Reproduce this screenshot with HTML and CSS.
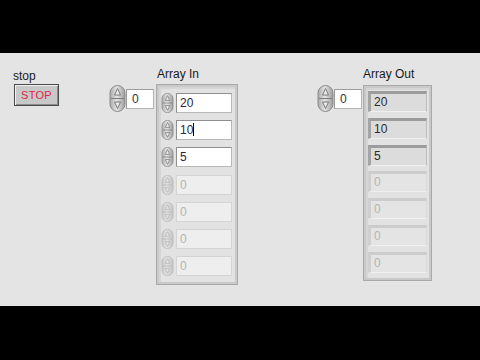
FILE: index.html
```html
<!DOCTYPE html>
<html lang="en">
<head>
    <meta charset="UTF-8">
    <title>Front Panel</title>
    <link rel="stylesheet" href="styles.css">
</head>
<body>
    <div class="letterbox"></div>
    <main class="panel">
        <div class="stop-ctrl">
            <div class="label">stop</div>
            <button class="stop-btn">STOP</button>
        </div>

        <div class="array-ctrl array-in">
            <div class="label">Array In</div>
            <div class="index">
                <svg class="spin big" viewBox="0 0 17 27"><use href="#spinner"/></svg>
                <div class="index-box">0</div>
            </div>
            <div class="frame" id="array-in"></div>
        </div>

        <div class="array-ctrl array-out">
            <div class="label">Array Out</div>
            <div class="index">
                <svg class="spin big" viewBox="0 0 17 27"><use href="#spinner"/></svg>
                <div class="index-box">0</div>
            </div>
            <div class="frame" id="array-out"></div>
        </div>
    </main>
    <div class="letterbox bottom"></div>

    <svg width="0" height="0" style="position: absolute">
        <defs>
            <linearGradient id="knob" x1="0" x2="1">
                <stop offset="0" stop-color="#a9a9a9"/>
                <stop offset="0.45" stop-color="#e4e4e4"/>
                <stop offset="1" stop-color="#9c9c9c"/>
            </linearGradient>
            <g id="spinner">
                <rect x="1" y="0.5" width="15" height="26" rx="7.5" fill="url(#knob)" stroke="#8a8a8a"/>
                <line x1="2" y1="13.5" x2="15" y2="13.5" stroke="#7d7d7d"/>
                <path d="M8.5 3.5 L5.5 10 H11.5 Z" fill="#eaeaea" stroke="#6e6e6e" stroke-width="0.9"/>
                <path d="M8.5 23.5 L5.5 17 H11.5 Z" fill="#eaeaea" stroke="#6e6e6e" stroke-width="0.9"/>
            </g>
        </defs>
    </svg>

    <script>
        const arrayIn = [20, 10, 5];
        const rows = 7;

        function renderArray(id, values, isControl) {
            const frame = document.getElementById(id);
            for (let i = 0; i < rows; i++) {
                const row = document.createElement("div");
                row.classList.add("elem");
                if (i >= values.length) row.classList.add("empty");

                const value = i < values.length ? values[i] : 0;
                let html = "";
                if (isControl) {
                    html += '<svg class="spin" viewBox="0 0 17 27"><use href="#spinner"/></svg>';
                }
                html += `<div class="field">${value}${isControl && i === 1 ? '<span class="caret"></span>' : ""}</div>`;
                row.innerHTML = html;
                frame.appendChild(row);
            }
        }

        renderArray("array-in", arrayIn, true);
        renderArray("array-out", arrayIn, false);
    </script>
</body>
</html>
```

FILE: styles.css
```css
body {
    margin: 0;
    width: 480px;
    height: 360px;
    background: #000;
    font-family: "Liberation Sans", Arial, sans-serif;
    font-size: 12px;
    color: #1a1a1a;
    overflow: hidden;
}

.letterbox {
    height: 53px;
    background: #000;
}

.letterbox.bottom {
    height: 54px;
}

.panel {
    height: 253px;
    background: #e4e4e4;
    display: flex;
    align-items: flex-start;
    padding-top: 14px;
    box-sizing: border-box;
}

.label {
    height: 14px;
    line-height: 14px;
}

/* stop button */
.stop-ctrl {
    margin-left: 13px;
    padding-top: 2px;
}

.stop-btn {
    display: block;
    margin: 1px 0 0 1px;
    width: 45px;
    height: 22px;
    padding: 0;
    border: 1px solid #4a4a4a;
    box-shadow: inset 1px 1px 0 #f2f2f2, inset -1px -1px 0 #8c8c8c;
    background: #c8c8c8;
    color: #e4244c;
    font-family: "Liberation Sans", Arial, sans-serif;
    font-size: 11px;
    letter-spacing: 0.3px;
}

/* array controls */
.array-ctrl {
    display: grid;
    grid-template-columns: auto auto;
    grid-template-rows: 17px auto;
    column-gap: 3px;
}

.array-ctrl .label {
    grid-column: 2;
}

.array-ctrl .index {
    grid-column: 1;
    grid-row: 2;
    display: flex;
    align-items: center;
    height: 27px;
    margin-top: 1px;
}

.array-in {
    margin-left: 50px;
}

.array-in .frame {
    margin-left: -1px;
}

.array-out {
    margin-left: 79px;
    column-gap: 1px;
}

.spin {
    width: 15px;
    height: 20px;
    flex-shrink: 0;
}

.spin.big {
    width: 17px;
    height: 27px;
}

.index-box {
    width: 28px;
    height: 20px;
    box-sizing: border-box;
    border: 1px solid #b4b4b4;
    border-top-color: #9a9a9a;
    border-left-color: #9a9a9a;
    background: #fff;
    line-height: 18px;
    padding-left: 5px;
    color: #2a3a3a;
}

.frame {
    grid-column: 2;
    grid-row: 2;
    display: flex;
    flex-direction: column;
    border: 1px solid #a9a9a9;
    box-shadow: inset 0 0 0 2px #c9c9c9, inset 3px 3px 0 1px #d6d6d6;
    background: #e2e2e2;
}

.array-in .frame {
    width: 82px;
    height: 201px;
    box-sizing: border-box;
    padding: 8px 5px 0 3px;
    gap: 7.2px;
}

.array-out .frame {
    width: 69px;
    height: 196px;
    box-sizing: border-box;
    padding: 5px 4px 0 4px;
    gap: 5.8px;
    margin-top: 1px;
}

.elem {
    display: flex;
    align-items: center;
    height: 20px;
}

.array-in .field {
    width: 57px;
    height: 20px;
    margin-left: 1px;
    box-sizing: border-box;
    border: 1px solid #b8b8b8;
    border-top-color: #8f8f8f;
    border-left-color: #8f8f8f;
    background: #fff;
    line-height: 18px;
    padding-left: 3px;
    color: #2a2440;
}

.array-out .elem {
    height: 21px;
}

.array-out .field {
    width: 59px;
    height: 21px;
    box-sizing: border-box;
    border-top: 3px solid #9c9c9c;
    border-left: 3px solid #a4a4a4;
    border-right: 1px solid #bdbdbd;
    border-bottom: 1px solid #f0f0f0;
    background: #dcdcdc;
    line-height: 17px;
    padding-left: 3px;
    color: #2b2b2b;
}

.caret {
    display: inline-block;
    width: 1px;
    height: 13px;
    background: #000;
    vertical-align: -2px;
}

/* elements past the end of the array */
.elem.empty .spin {
    opacity: 0.45;
}

.array-in .elem.empty .field {
    background: #eeeeee;
    border-color: #d4d4d4;
    color: #b4b4b4;
}

.array-out .elem.empty .field {
    background: #e4e4e4;
    border-top-color: #cccccc;
    border-left-color: #cfcfcf;
    border-right-color: #d8d8d8;
    color: #b4b4b4;
}
```
